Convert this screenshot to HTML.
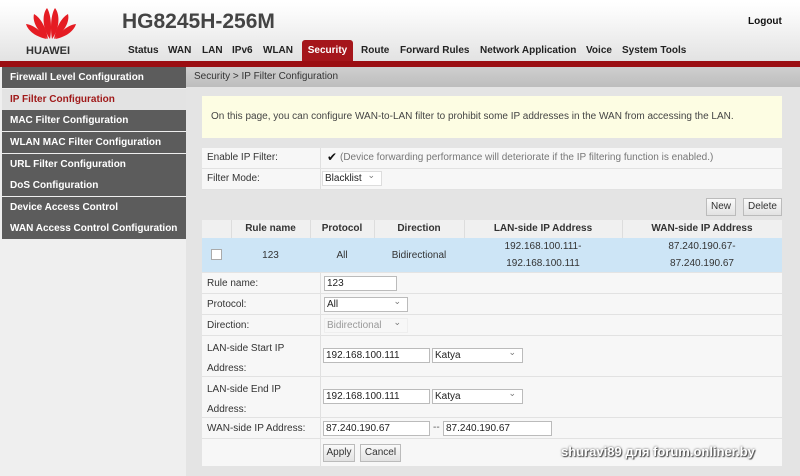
<!DOCTYPE html>
<html><head><meta charset="utf-8"><style>
*{margin:0;padding:0;box-sizing:border-box}
body{width:800px;height:476px;overflow:hidden;font-family:"Liberation Sans",Arial,sans-serif;font-size:10px;color:#333;background:#e4e4e4;position:relative}
.a{position:absolute;white-space:nowrap}
#hdr{left:0;top:0;width:800px;height:62px;background:linear-gradient(#fff 0,#fafafa 20%,#e2e2e2 100%);border-top:2px solid #fff}
#redbar{left:0;top:61px;width:800px;height:6px;background:#9b0e12}
.nav{top:45px;font-weight:bold;font-size:10px;color:#222}
#sec{left:302px;top:40px;width:51px;height:22px;background:#a5161b;border-radius:3px 3px 0 0;color:#fff;font-weight:bold;text-align:center;line-height:22px}
#side{left:0;top:67px;width:186px;height:409px;background:#efefef}
.si{position:absolute;left:2px;width:184px;height:21px;background:#5c5c5c;color:#fff;font-weight:bold;line-height:21px;padding-left:8px;font-size:10px;white-space:nowrap}
#crumb{left:186px;top:67px;width:614px;height:20px;background:linear-gradient(#cfcfcf,#bdbdbd);line-height:20px;padding-left:8px;color:#333}
.lbl{position:absolute;left:0;width:118px;padding-left:5px;color:#333;white-space:nowrap}
.inp{position:absolute;height:15px;background:#fff;border:1px solid #bbb;padding-left:2px;line-height:13px;font-size:10px;color:#222;white-space:nowrap}
.sel:after{content:"⌄";position:absolute;right:6px;top:-3px;color:#777;font-size:9px}
.btn{position:absolute;height:18px;background:linear-gradient(#fafafa,#e2e2e2);border:1px solid #bbb;text-align:center;line-height:16px;color:#333}
.row{position:absolute;left:202px;width:580px;border-bottom:1px solid #e2e2e2;background:#f7f7f7}
.row .sep{position:absolute;left:118px;top:0;bottom:0;border-left:1px solid #e0e0e0}
</style></head><body>
<div class="a" id="hdr"></div>
<svg class="a" style="left:24px;top:6px" width="54" height="34" viewBox="0 0 54 34">
<g fill="#e51c23">
<path d="M26 33 C18 22 18 8 23 2 C27 8 28 22 26 33 Z"/>
<path d="M28 33 C36 22 36 8 31 2 C27 8 26 22 28 33 Z"/>
<path d="M24 33 C14 26 8 16 10 8 C17 12 22 22 24 33 Z"/>
<path d="M30 33 C40 26 46 16 44 8 C37 12 32 22 30 33 Z"/>
<path d="M23 33 C12 31 4 25 2 18 C10 19 18 26 23 33 Z"/>
<path d="M31 33 C42 31 50 25 52 18 C44 19 36 26 31 33 Z"/>
</g></svg>
<div class="a" style="left:26px;top:45px;font-weight:bold;font-size:11px;color:#333">HUAWEI</div>
<div class="a" style="left:122px;top:10px;font-weight:bold;font-size:21px;color:#444">HG8245H-256M</div>
<div class="a" style="left:748px;top:16px;font-weight:bold;font-size:10px;color:#111">Logout</div>
<div class="a nav" style="left:128px">Status</div>
<div class="a nav" style="left:168px">WAN</div>
<div class="a nav" style="left:202px">LAN</div>
<div class="a nav" style="left:232px">IPv6</div>
<div class="a nav" style="left:263px">WLAN</div>
<div class="a" id="sec">Security</div>
<div class="a nav" style="left:361px">Route</div>
<div class="a nav" style="left:400px">Forward Rules</div>
<div class="a nav" style="left:480px">Network Application</div>
<div class="a nav" style="left:586px">Voice</div>
<div class="a nav" style="left:622px">System Tools</div>
<div class="a" id="redbar"></div>

<div class="a" id="side">
<div class="si" style="top:0">Firewall Level Configuration</div>
<div class="si" style="top:22px;background:#e3e3e3;color:#a01a1a">IP Filter Configuration</div>
<div class="si" style="top:43px">MAC Filter Configuration</div>
<div class="si" style="top:65px">WLAN MAC Filter Configuration</div>
<div class="si" style="top:87px">URL Filter Configuration</div>
<div class="si" style="top:108px">DoS Configuration</div>
<div class="si" style="top:130px">Device Access Control</div>
<div class="si" style="top:151px">WAN Access Control Configuration</div>
</div>
<div class="a" id="crumb">Security &gt; IP Filter Configuration</div>

<div class="a" style="left:202px;top:96px;width:580px;height:42px;background:#fdfde3;line-height:42px;padding-left:9px;color:#444">On this page, you can configure WAN-to-LAN filter to prohibit some IP addresses in the WAN from accessing the LAN.</div>

<div class="row" style="top:148px;height:21px"><div class="sep"></div><div class="lbl" style="top:4px">Enable IP Filter:</div>
<div class="a" style="left:125px;top:2px;font-size:12px;color:#111">✔</div><div class="a" style="left:138px;top:4px;color:#777">(Device forwarding performance will deteriorate if the IP filtering function is enabled.)</div></div>
<div class="row" style="top:169px;height:21px"><div class="sep"></div><div class="lbl" style="top:4px">Filter Mode:</div>
<div class="inp sel" style="left:120px;top:2px;width:60px;border-color:#ddd">Blacklist</div></div>

<div class="btn" style="left:706px;top:198px;width:30px">New</div>
<div class="btn" style="left:743px;top:198px;width:39px">Delete</div>

<div class="a" style="left:202px;top:220px;width:580px;height:18px;background:#f0f0f0;font-weight:bold;color:#333;line-height:18px">
<span class="a" style="left:29px;width:79px;text-align:center">Rule name</span>
<span class="a" style="left:108px;width:64px;text-align:center">Protocol</span>
<span class="a" style="left:172px;width:90px;text-align:center">Direction</span>
<span class="a" style="left:262px;width:158px;text-align:center">LAN-side IP Address</span>
<span class="a" style="left:420px;width:160px;text-align:center">WAN-side IP Address</span>
<span class="a" style="left:29px;top:0;height:18px;border-left:1px solid #ddd"></span>
<span class="a" style="left:108px;top:0;height:18px;border-left:1px solid #ddd"></span>
<span class="a" style="left:172px;top:0;height:18px;border-left:1px solid #ddd"></span>
<span class="a" style="left:262px;top:0;height:18px;border-left:1px solid #ddd"></span>
<span class="a" style="left:420px;top:0;height:18px;border-left:1px solid #ddd"></span>
</div>
<div class="a" style="left:202px;top:238px;width:580px;height:34px;background:#cde5f6;color:#333;line-height:17px">
<span class="a" style="left:9px;top:11px;width:11px;height:11px;background:#fff;border:1px solid #aaa"></span>
<span class="a" style="left:29px;top:9px;width:79px;text-align:center">123</span>
<span class="a" style="left:108px;top:9px;width:64px;text-align:center">All</span>
<span class="a" style="left:172px;top:9px;width:90px;text-align:center">Bidirectional</span>
<span class="a" style="left:262px;top:0;width:158px;text-align:center">192.168.100.111-<br>192.168.100.111</span>
<span class="a" style="left:420px;top:0;width:160px;text-align:center">87.240.190.67-<br>87.240.190.67</span>
</div>

<div class="row" style="top:273px;height:21px"><div class="sep"></div><div class="lbl" style="top:5px">Rule name:</div><div class="inp" style="left:122px;top:3px;width:73px">123</div></div>
<div class="row" style="top:294px;height:21px"><div class="sep"></div><div class="lbl" style="top:5px">Protocol:</div><div class="inp sel" style="left:122px;top:3px;width:84px">All</div></div>
<div class="row" style="top:315px;height:21px"><div class="sep"></div><div class="lbl" style="top:5px">Direction:</div><div class="inp sel" style="left:122px;top:3px;width:84px;background:#f7f7f7;border-color:#eee;color:#999">Bidirectional</div></div>
<div class="row" style="top:336px;height:41px"><div class="sep"></div><div class="lbl" style="top:3px;line-height:20px">LAN-side Start IP<br>Address:</div>
<div class="inp" style="left:121px;top:12px;width:107px">192.168.100.111</div><div class="inp sel" style="left:230px;top:12px;width:91px">Katya</div></div>
<div class="row" style="top:377px;height:41px"><div class="sep"></div><div class="lbl" style="top:3px;line-height:20px">LAN-side End IP<br>Address:</div>
<div class="inp" style="left:121px;top:12px;width:107px">192.168.100.111</div><div class="inp sel" style="left:230px;top:12px;width:91px">Katya</div></div>
<div class="row" style="top:418px;height:21px"><div class="sep"></div><div class="lbl" style="top:5px">WAN-side IP Address:</div>
<div class="inp" style="left:121px;top:3px;width:107px">87.240.190.67</div><div class="a" style="left:231px;top:4px;color:#555">--</div><div class="inp" style="left:241px;top:3px;width:109px">87.240.190.67</div></div>
<div class="row" style="top:439px;height:27px;border:none"><div class="sep"></div>
<div class="btn" style="left:121px;top:5px;width:32px">Apply</div><div class="btn" style="left:158px;top:5px;width:41px">Cancel</div>
<div class="a" style="left:359px;top:5px;font-weight:bold;font-size:13px;color:#fff;text-shadow:0 0 2px #555,1px 1px 1px #444">shuravi89 для forum.onliner.by</div></div>
</body></html>
